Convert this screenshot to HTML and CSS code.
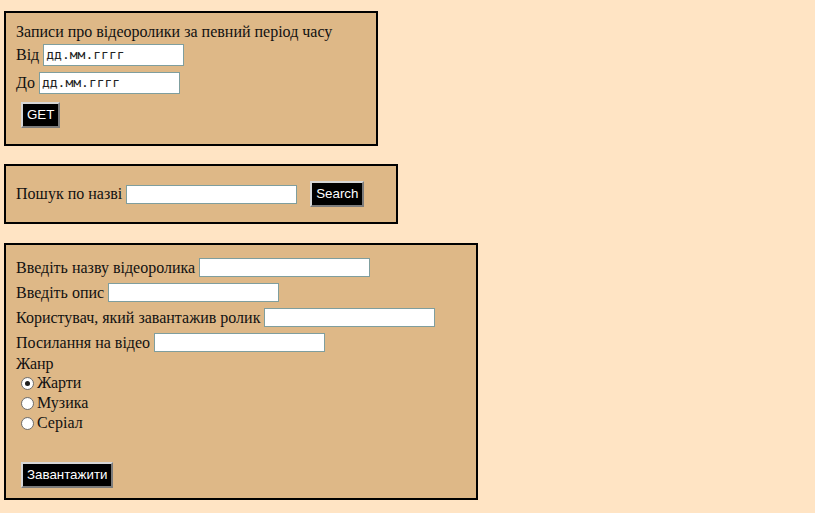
FILE: index.html
```html
<!DOCTYPE html>
<html lang="uk">
<head>
<meta charset="utf-8">
<title>Відеоролики</title>
<link rel="stylesheet" href="styles.css">
</head>
<body>
<form class="box box-period">
  <div class="title">Записи про відеоролики за певний період часу</div>
  <div class="date-row"><label>Від</label><span class="date-input">дд.мм.гггг</span></div>
  <div class="date-row"><label>До</label><span class="date-input">дд.мм.гггг</span></div>
  <button type="button" class="btn btn-get">GET</button>
</form>
<form class="box box-search">
  <div class="search-row">
    <label>Пошук по назві</label><input type="text" class="field">
    <button type="button" class="btn btn-search">Search</button>
  </div>
</form>
<form class="box box-upload">
  <div class="field-row"><label>Введіть назву відеоролика</label><input type="text" class="field"></div>
  <div class="field-row"><label>Введіть опис</label><input type="text" class="field"></div>
  <div class="field-row"><label>Користувач, який завантажив ролик</label><input type="text" class="field"></div>
  <div class="field-row"><label>Посилання на відео</label><input type="text" class="field"></div>
  <div class="genre">Жанр</div>
  <label class="radio-row"><input type="radio" name="genre" class="radio" checked>Жарти</label>
  <label class="radio-row"><input type="radio" name="genre" class="radio">Музика</label>
  <label class="radio-row"><input type="radio" name="genre" class="radio">Серіал</label>
  <button type="button" class="btn btn-upload">Завантажити</button>
</form>
</body>
</html>
```
FILE: styles.css
```css
html, body {
  margin: 0;
  padding: 0;
}
body {
  background: #ffe4c4;
  font-family: "Liberation Serif", "Times New Roman", serif;
  font-size: 16px;
  line-height: 18px;
  color: #111;
  padding: 11px 0 0 4px;
}
.box {
  background: #deb887;
  border: 2px solid #000;
  padding: 10px;
  margin: 0;
  display: flex;
  flex-direction: column;
  align-items: flex-start;
}
.box-period { width: 350px; margin-bottom: 18px; }
.box-search { width: 370px; margin-bottom: 19px; }
.box-upload { width: 450px; }

.title { height: 18px; }
.date-row {
  height: 28px;
  display: flex;
  align-items: center;
}
.date-input {
  box-sizing: border-box;
  width: 141px;
  height: 22px;
  margin-left: 4px;
  background: #fff;
  border: 1px solid #7f9e9e;
  padding: 0 0 0 2px;
  font-family: "DejaVu Sans Mono", monospace;
  font-size: 13px;
  line-height: 20px;
  color: #222;
}
.btn {
  box-sizing: border-box;
  height: 26px;
  background: #000;
  color: #fff;
  font-family: "Liberation Sans", Arial, sans-serif;
  font-size: 13.33px;
  line-height: 16px;
  padding: 0 4px;
  border: 2px solid;
  border-color: #d6d6d6 #7c7c7c #7c7c7c #d6d6d6;
  cursor: pointer;
}
.btn-get { margin: 5px 0 6px 5px; }
.search-row {
  height: 36px;
  display: flex;
  align-items: center;
}
.btn-search { margin-left: 13px; }
.field {
  box-sizing: border-box;
  width: 171px;
  height: 19px;
  margin: 0 0 0 4px;
  padding: 0 2px;
  background: #fff;
  border: 1px solid #7f9e9e;
  font-family: "Liberation Sans", Arial, sans-serif;
  font-size: 13px;
}
.field-row {
  height: 25px;
  display: flex;
  align-items: center;
}
.genre { height: 18px; }
.radio-row {
  height: 20px;
  display: flex;
  align-items: center;
}
.radio {
  appearance: none;
  -webkit-appearance: none;
  box-sizing: border-box;
  width: 13px;
  height: 13px;
  margin: 0 3px 0 5px;
  border-radius: 50%;
  border: 1px solid #6f6f6f;
  background: radial-gradient(circle at 50% 60%, #ffffff 55%, #e6e6e6 100%);
  position: relative;
}
.radio:checked::after {
  content: "";
  position: absolute;
  left: 3px;
  top: 3px;
  width: 5px;
  height: 5px;
  border-radius: 50%;
  background: #1e1e1e;
}
.btn-upload { margin: 29px 0 0 5px; }
```
